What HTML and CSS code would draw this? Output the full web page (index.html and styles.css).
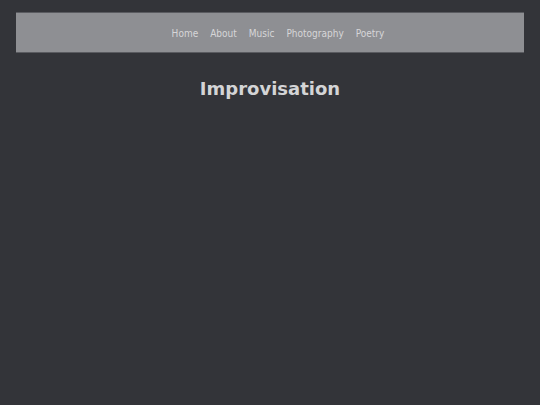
FILE: index.html
```html
<!DOCTYPE html>
<html>
<head>
<meta charset="utf-8">
<link rel="stylesheet" href="styles.css">
</head>
<body>
<header class="site-header">
  <nav class="nav">
    <a href="#">Home</a>
    <a href="#">About</a>
    <a href="#">Music</a>
    <a href="#">Photography</a>
    <a href="#">Poetry</a>
  </nav>
</header>
<main class="content">
  <h1 class="title">Improvisation</h1>
</main>
</body>
</html>
```
FILE: styles.css
```css
html, body {
  margin: 0;
  padding: 0;
  background: #333439;
  font-family: "DejaVu Sans", Verdana, sans-serif;
}
body {
  padding: 12px 16px;
}
.site-header {
  background: #8e8f93;
  border-top: 1px solid #5a5b60;
  border-bottom: 1px solid #5a5b60;
  height: 39px;
  display: flex;
  align-items: center;
  justify-content: center;
}
.nav {
  display: flex;
  gap: 12px;
  padding: 2px 0 0 16px;
  font-family: "DejaVu Sans Condensed", "DejaVu Sans", sans-serif;
  font-size: 10px;
}
.nav a {
  color: #d6d6d8;
  text-decoration: none;
}
.content {
  text-align: center;
}
.title {
  margin: 25px 0 0;
  font-size: 18px;
  font-weight: bold;
  color: #d4d4d6;
}
```
